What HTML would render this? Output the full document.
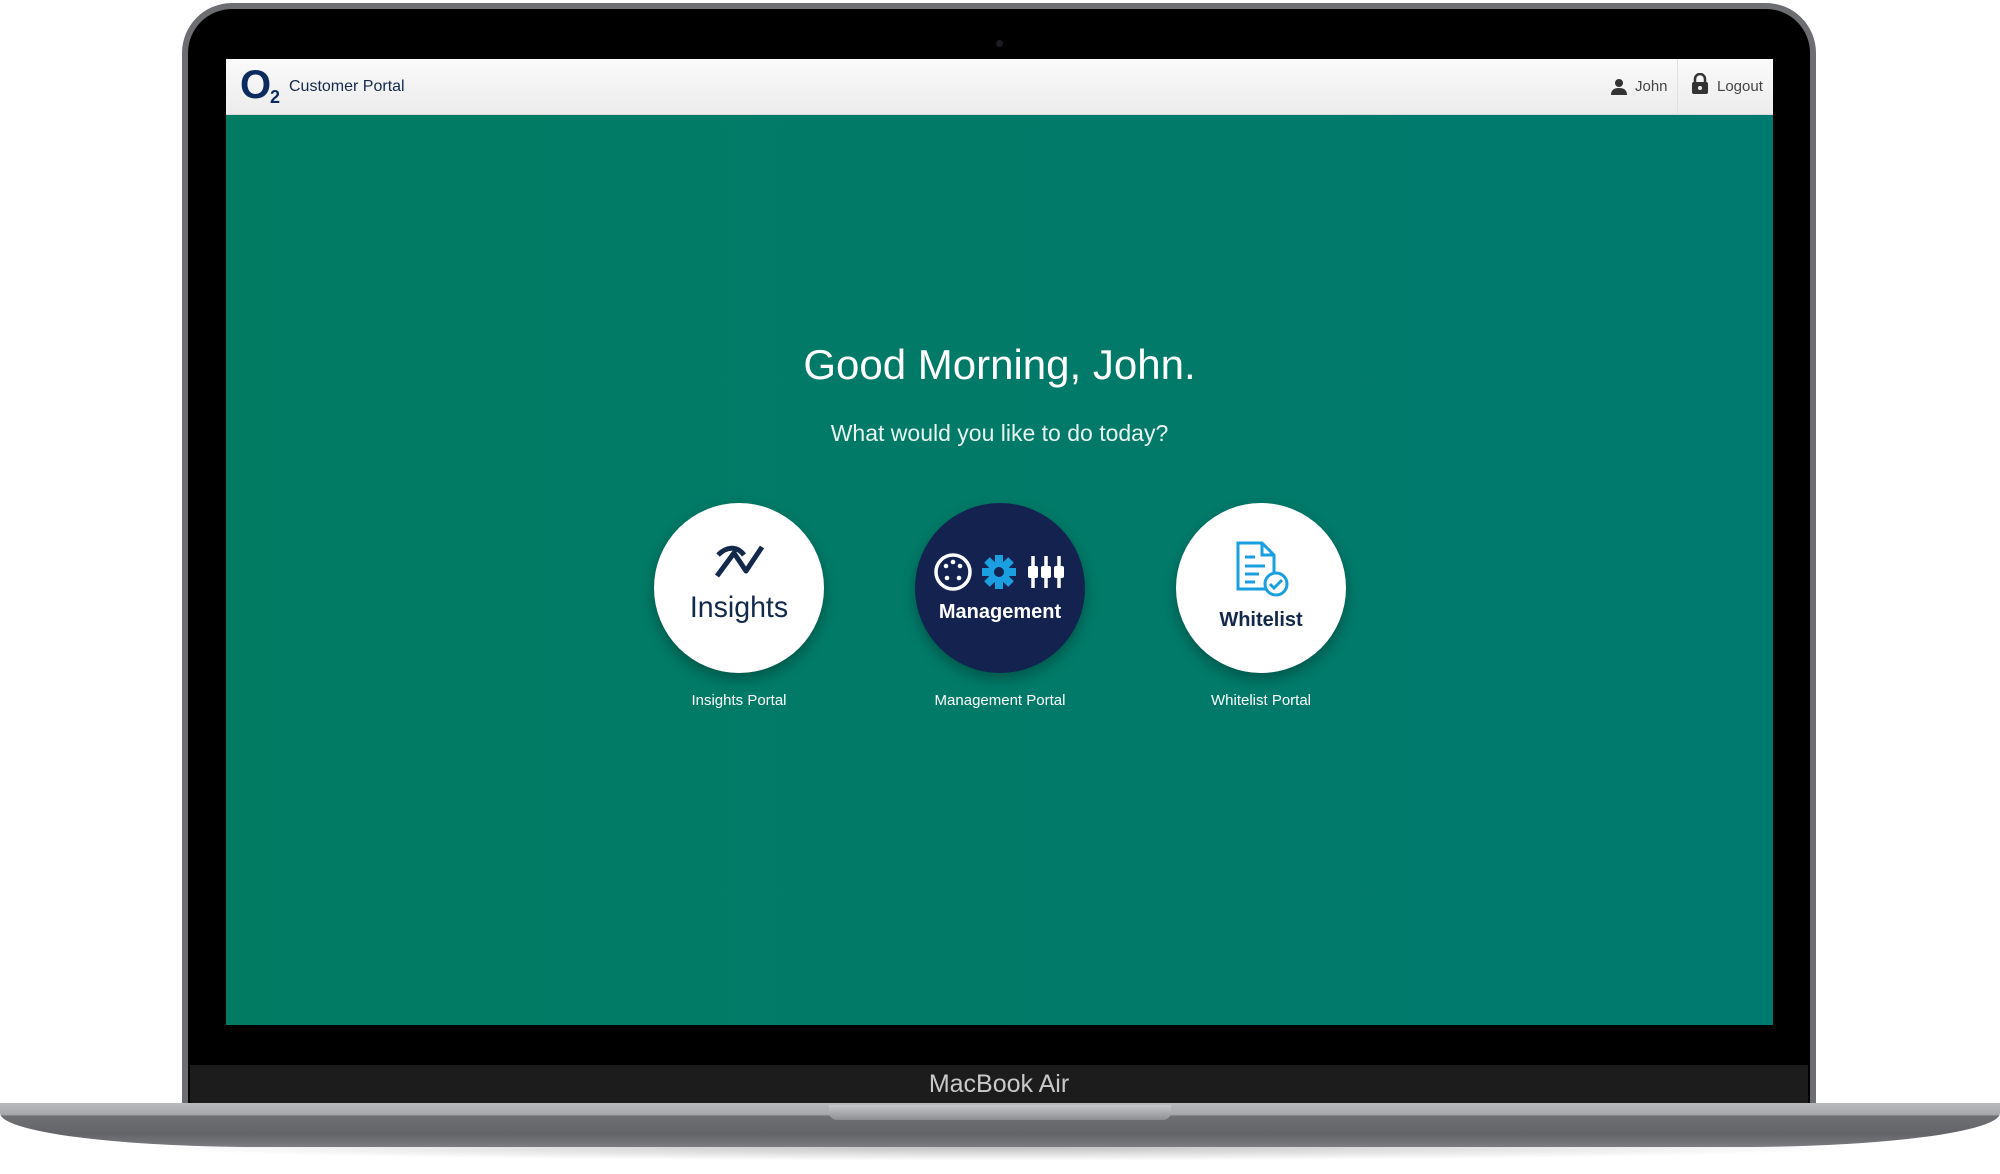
<!DOCTYPE html>
<html><head><meta charset="utf-8"><style>
*{margin:0;padding:0;box-sizing:border-box}
body{width:2000px;height:1174px;background:#fff;position:relative;overflow:hidden;font-family:"Liberation Sans",sans-serif}
.frame{position:absolute;left:182px;top:3px;width:1634px;height:1110px;border-radius:50px 50px 0 0;background:#6d6e72;}
.bezel{position:absolute;left:188px;top:9px;width:1622px;height:1104px;border-radius:44px 44px 0 0;background:#000}
.chin{position:absolute;left:190px;top:1065px;width:1618px;height:38px;background:#1c1c1d;color:#c9c9cb;font-size:25px;text-align:center;line-height:38px}
.cam{position:absolute;left:996px;top:40px;width:7px;height:7px;border-radius:50%;background:#1c1c22}
.screen{position:absolute;left:226px;top:59px;width:1547px;height:966px;background:linear-gradient(90deg,#027b63,#007a6e);overflow:hidden}
.hdr{position:absolute;left:0;top:0;width:100%;height:56px;background:linear-gradient(#fafafa,#ececec);border-bottom:1px solid #d6d6d6}
.base{position:absolute;left:0;top:1103px;width:2000px;height:44px;background:linear-gradient(#b9babd 0,#a7a8ac 26%,#6f7074 30%,#636468 70%,#7b7c80 100%);border-radius:0 0 260px 260px/0 0 34px 34px}
.notch{position:absolute;left:829px;top:1105px;width:342px;height:15px;background:linear-gradient(#c6c7ca,#8e8f93);border-radius:0 0 8px 8px}
.shadow{position:absolute;left:120px;top:1147px;width:1760px;height:14px;background:radial-gradient(ellipse at 50% 0,rgba(0,0,0,.25),rgba(0,0,0,0) 70%)}
.circ{position:absolute;width:170px;height:170px;border-radius:50%;top:444px;box-shadow:0 6px 14px rgba(0,0,0,.3);text-align:center}
.lbl{position:absolute;top:633px;width:260px;text-align:center;color:#fff;font-size:15px}
</style></head><body>
<div class="shadow"></div>
<div class="frame"></div>
<div class="bezel"></div>
<div class="cam"></div>
<div class="chin">MacBook Air</div>
<div class="base"></div>
<div class="notch"></div>
<div class="screen">
 <div class="hdr">
  <div style="position:absolute;left:14px;top:4px;color:#0b2a5e;font-size:40px;font-weight:bold">O</div>
  <div style="position:absolute;left:44px;top:28px;color:#0b2a5e;font-size:18px;font-weight:bold">2</div>
  <div style="position:absolute;left:63px;top:19px;color:#13294b;font-size:16px">Customer Portal</div>
  <svg style="position:absolute;left:1384px;top:19px" width="18" height="18" viewBox="0 0 18 18"><circle cx="9" cy="5" r="4" fill="#333"/><path d="M1 17c0-5 3-7 8-7s8 2 8 7z" fill="#333"/></svg>
  <div style="position:absolute;left:1409px;top:19px;color:#444;font-size:15px">John</div>
  <div style="position:absolute;left:1451px;top:0;width:1px;height:56px;background:#e0e0e0"></div>
  <svg style="position:absolute;left:1465px;top:14px" width="18" height="22" viewBox="0 0 18 22"><path d="M4 10V6a5 5 0 0110 0v4" stroke="#333" stroke-width="2.5" fill="none"/><rect x="1" y="9" width="16" height="12" rx="2" fill="#333"/><circle cx="9" cy="15" r="2" fill="#eee"/></svg>
  <div style="position:absolute;left:1491px;top:19px;color:#444;font-size:15px">Logout</div>
 </div>
 <div style="position:absolute;left:0;width:100%;top:282px;text-align:center;color:#fff;font-size:42px">Good Morning, John.</div>
 <div style="position:absolute;left:0;width:100%;top:361px;text-align:center;color:#e8f4f0;font-size:23px">What would you like to do today?</div>
 <div class="circ" style="left:428px;background:#fff">
  <svg style="position:absolute;left:60px;top:40px" width="52" height="36" viewBox="0 0 52 36"><path d="M3 33L20 10l12 18L48 4M4 12C14 2 24 4 30 12" stroke="#13294b" stroke-width="5" fill="none" stroke-linejoin="round"/></svg>
  <div style="position:absolute;left:0;width:100%;top:88px;color:#13294b;font-size:30px;transform:scaleX(.95)">Insights</div>
 </div>
 <div class="circ" style="left:689px;background:#13224f">
  <svg style="position:absolute;left:16px;top:48px" width="140" height="42" viewBox="0 0 140 42"><circle cx="22" cy="21" r="17" stroke="#fff" stroke-width="3.5" fill="none"/><circle cx="15" cy="15" r="2.3" fill="#fff"/><circle cx="29" cy="15" r="2.3" fill="#fff"/><circle cx="22" cy="11" r="2.3" fill="#fff"/><circle cx="16" cy="27" r="2.3" fill="#fff"/><circle cx="28" cy="27" r="2.3" fill="#fff"/><g transform="translate(68 21)" fill="#1a9fe0"><circle r="11"/><g><rect x="-4" y="-17" width="8" height="34"/><rect x="-4" y="-17" width="8" height="34" transform="rotate(45)"/><rect x="-4" y="-17" width="8" height="34" transform="rotate(90)"/><rect x="-4" y="-17" width="8" height="34" transform="rotate(135)"/></g><circle r="5" fill="#13224f"/></g><g stroke="#fff" stroke-width="3.5"><path d="M102 5v32M115 5v32M128 5v32"/></g><g fill="#fff"><rect x="97" y="15" width="10" height="12" rx="2"/><rect x="110" y="15" width="10" height="12" rx="2"/><rect x="123" y="15" width="10" height="12" rx="2"/></g></svg>
  <div style="position:absolute;left:0;width:100%;top:98px;color:#fff;font-size:20px;font-weight:bold">Management</div>
 </div>
 <div class="circ" style="left:950px;background:#fff">
  <svg style="position:absolute;left:58px;top:38px" width="58" height="58" viewBox="0 0 58 58"><path d="M4 2h24l12 12v34H4z" stroke="#1a9fe0" stroke-width="3" fill="none"/><path d="M28 2v12h12M11 16h10M11 25h20M11 33h14M11 41h10" stroke="#1a9fe0" stroke-width="3" fill="none"/><circle cx="42" cy="43" r="11" fill="#fff" stroke="#1a9fe0" stroke-width="3"/><path d="M36 43l4 4 8-8" stroke="#1a9fe0" stroke-width="3" fill="none"/></svg>
  <div style="position:absolute;left:0;width:100%;top:106px;color:#13294b;font-size:20px;font-weight:bold">Whitelist</div>
 </div>
 <div class="lbl" style="left:383px">Insights Portal</div>
 <div class="lbl" style="left:644px">Management Portal</div>
 <div class="lbl" style="left:905px">Whitelist Portal</div>
</div>
</body></html>
